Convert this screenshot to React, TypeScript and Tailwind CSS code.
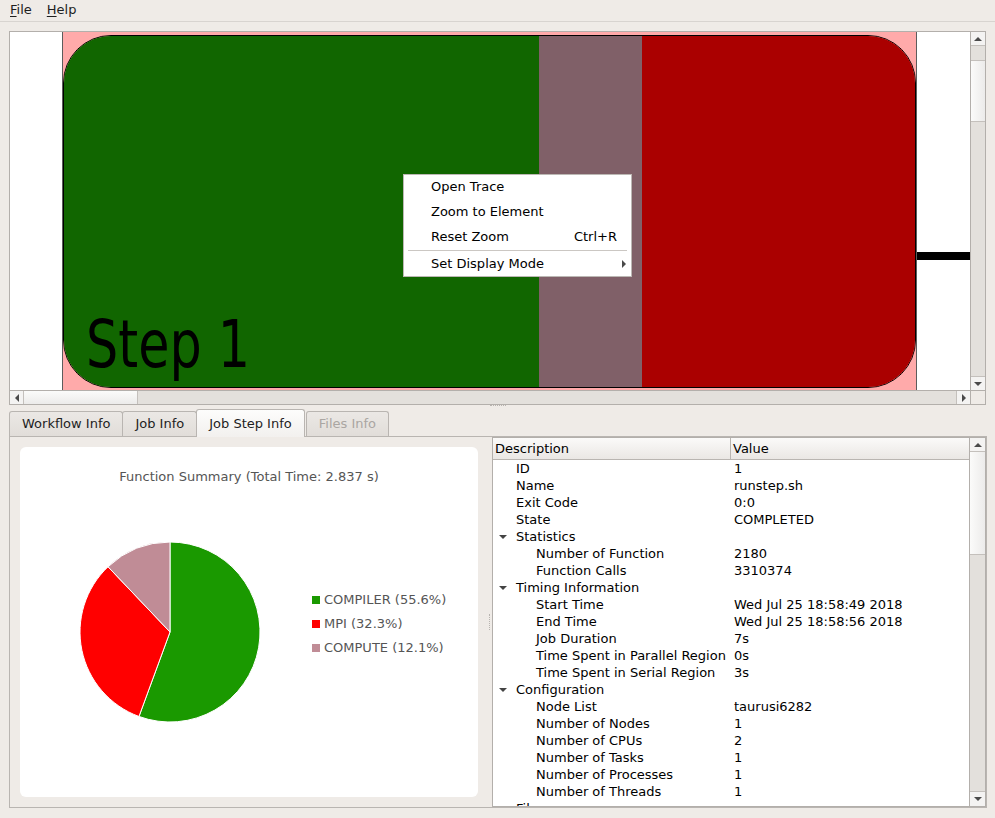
import React from 'react';

type Row = { kind: 'leaf' | 'group' | 'child'; d: string; v?: string };

const rows: Row[] = [
  { kind: 'leaf', d: 'ID', v: '1' },
  { kind: 'leaf', d: 'Name', v: 'runstep.sh' },
  { kind: 'leaf', d: 'Exit Code', v: '0:0' },
  { kind: 'leaf', d: 'State', v: 'COMPLETED' },
  { kind: 'group', d: 'Statistics' },
  { kind: 'child', d: 'Number of Function', v: '2180' },
  { kind: 'child', d: 'Function Calls', v: '3310374' },
  { kind: 'group', d: 'Timing Information' },
  { kind: 'child', d: 'Start Time', v: 'Wed Jul 25 18:58:49 2018' },
  { kind: 'child', d: 'End Time', v: 'Wed Jul 25 18:58:56 2018' },
  { kind: 'child', d: 'Job Duration', v: '7s' },
  { kind: 'child', d: 'Time Spent in Parallel Region', v: '0s' },
  { kind: 'child', d: 'Time Spent in Serial Region', v: '3s' },
  { kind: 'group', d: 'Configuration' },
  { kind: 'child', d: 'Node List', v: 'taurusi6282' },
  { kind: 'child', d: 'Number of Nodes', v: '1' },
  { kind: 'child', d: 'Number of CPUs', v: '2' },
  { kind: 'child', d: 'Number of Tasks', v: '1' },
  { kind: 'child', d: 'Number of Processes', v: '1' },
  { kind: 'child', d: 'Number of Threads', v: '1' },
  { kind: 'group', d: 'Files' },
];

const legend = [
  { color: 'bg-[#1a9900]', label: 'COMPILER (55.6%)' },
  { color: 'bg-[#ff0000]', label: 'MPI (32.3%)' },
  { color: 'bg-[#c08c96]', label: 'COMPUTE (12.1%)' },
];

const UpArrow = () => (
  <div className="w-0 h-0 border-x-[4px] border-x-transparent border-b-[4px] border-b-[#4a4a4a]" />
);
const DownArrow = () => (
  <div className="w-0 h-0 border-x-[4px] border-x-transparent border-t-[4px] border-t-[#4a4a4a]" />
);
const LeftArrow = () => (
  <div className="w-0 h-0 border-y-[4px] border-y-transparent border-r-[4px] border-r-[#4a4a4a]" />
);
const RightArrow = () => (
  <div className="w-0 h-0 border-y-[4px] border-y-transparent border-l-[4px] border-l-[#4a4a4a]" />
);

const Tab = ({ label, selected, disabled, first }: { label: string; selected?: boolean; disabled?: boolean; first?: boolean }) => (
  <div
    className={`flex items-center justify-center px-[12px] border border-[#b9b5b1] rounded-t-[3px] ${first ? '' : '-ml-px'} ${
      selected
        ? 'h-[28px] -mb-px border-b-0 bg-gradient-to-b from-[#fdfdfc] to-[#f2f0ee] z-10'
        : 'h-[25px] border-b-0 bg-gradient-to-b from-[#ebe8e5] to-[#e1ddd9]'
    } ${disabled ? 'text-[#aaa6a2]' : 'text-[#1e1e1e]'}`}
  >
    {label}
  </div>
);

export default function App() {
  return (
    <div className="relative w-[995px] h-[818px] overflow-hidden bg-[#efebe7] font-['DejaVu_Sans',sans-serif] text-[13px] text-[#1e1e1e] leading-[16px]">
      {/* menu bar */}
      <div className="h-[22px] border-b border-[#d8d4d0] flex items-center gap-[15px] pl-[10px] pb-[2px]">
        <span><span className="underline underline-offset-2">F</span>ile</span>
        <span><span className="underline underline-offset-2">H</span>elp</span>
      </div>

      {/* graphics view */}
      <div className="ml-[9px] mt-[9px] w-[977px] h-[374px] border border-[#b3afab] flex flex-col">
        <div className="flex h-[358px]">
          <div className="flex-1 flex bg-white overflow-hidden">
            <div className="w-[52px] shrink-0" />
            <div className="w-[855px] shrink-0 h-full bg-[#ffaaaa] border-x border-[#5c5c5c] pt-[3px]">
              <div className="h-[353px] rounded-[48px] border border-black overflow-hidden flex">
                <div className="w-[475px] shrink-0 bg-[#116600] flex flex-col justify-end pl-[22px] pb-[2px]">
                  <span className="text-[66px] leading-[80px] text-black origin-left scale-x-[0.77] inline-block whitespace-nowrap">Step 1</span>
                </div>
                <div className="w-[103px] shrink-0 bg-[#806068]" />
                <div className="flex-1 bg-[#aa0000]" />
              </div>
            </div>
            <div className="flex-1 flex flex-col">
              <div className="mt-[220px] h-[8px] bg-black" />
            </div>
          </div>
          <div className="w-[15px] border-l border-[#b3afab] flex flex-col bg-[#e3e0dc]">
            <div className="h-[14px] flex items-center justify-center bg-[#f4f3f2] border-b border-[#c4c0bc]"><UpArrow /></div>
            <div className="h-[14px]" />
            <div className="h-[62px] bg-gradient-to-r from-[#fbfbfa] to-[#ecebea] border-y border-[#c4c0bc]" />
            <div className="flex-1" />
            <div className="h-[14px] flex items-center justify-center bg-[#f4f3f2] border-t border-[#c4c0bc]"><DownArrow /></div>
          </div>
        </div>
        <div className="flex h-[14px] border-t border-[#b3afab]">
          <div className="flex-1 flex bg-[#e3e0dc]">
            <div className="w-[14px] flex items-center justify-center bg-[#f4f3f2] border-r border-[#c4c0bc]"><LeftArrow /></div>
            <div className="w-[114px] bg-gradient-to-b from-[#fbfbfa] to-[#ecebea] border-r border-[#c4c0bc]" />
            <div className="flex-1" />
            <div className="w-[14px] flex items-center justify-center bg-[#f4f3f2] border-l border-[#c4c0bc]"><RightArrow /></div>
          </div>
          <div className="w-[15px] border-l border-[#b3afab] bg-[#efebe7]" />
        </div>
      </div>

      {/* splitter handle */}
      <div className="h-[4px] flex justify-center">
        <div className="w-[16px] border-t border-dotted border-[#b8b4b0]" />
      </div>

      {/* tabs */}
      <div className="ml-[9px] h-[27px] flex items-end">
        <Tab label="Workflow Info" first />
        <Tab label="Job Info" />
        <Tab label="Job Step Info" selected />
        <div className="ml-[1px]"><Tab label="Files Info" disabled first /></div>
      </div>

      {/* tab panel */}
      <div className="ml-[9px] w-[978px] h-[372px] border border-[#b9b5b1] bg-[#efebe7] flex">
        <div className="ml-[10px] mt-[10px] w-[458px] h-[350px] shrink-0 rounded-[6px] bg-white flex flex-col">
          <div className="pt-[22px] text-center text-[#555555]">Function Summary (Total Time: 2.837 s)</div>
          <div className="flex mt-[57px]">
            <svg className="ml-[60px] shrink-0" width="180" height="180" viewBox="0 0 180 180">
              <path d="M90,90 L90,0 A90,90 0 1,1 58.98,174.48 Z" fill="#1a9900" stroke="#ffffff" strokeWidth="1" />
              <path d="M90,90 L58.98,174.48 A90,90 0 0,1 28.02,24.75 Z" fill="#ff0000" stroke="#ffffff" strokeWidth="1" />
              <path d="M90,90 L28.02,24.75 A90,90 0 0,1 90,0 Z" fill="#c08c96" stroke="#ffffff" strokeWidth="1" />
            </svg>
            <div className="ml-[52px] mt-[50px] flex flex-col gap-[8px]">
              {legend.map((l) => (
                <div key={l.label} className="flex items-center gap-[4px] text-[#555555]">
                  <div className={`w-[8px] h-[8px] ${l.color}`} />
                  <span>{l.label}</span>
                </div>
              ))}
            </div>
          </div>
        </div>
        <div className="w-[14px] shrink-0 flex items-center justify-end">
          <div className="h-[16px] border-l border-dotted border-[#b8b4b0] mr-[2px]" />
        </div>
        <div className="w-[494px] h-[370px] shrink-0 border border-[#b3afab] bg-white flex overflow-hidden">
          <div className="flex-1 flex flex-col overflow-hidden">
            <div className="h-[22px] shrink-0 flex border-b border-[#b9b5b1] bg-gradient-to-b from-[#fbfaf9] to-[#eae7e4] text-black">
              <div className="w-[238px] border-r border-[#b9b5b1] pl-[2px] flex items-center">Description</div>
              <div className="flex-1 pl-[2px] flex items-center">Value</div>
            </div>
            {rows.map((r) => (
              <div key={r.d} className="h-[17px] shrink-0 flex leading-[17px] text-black">
                <div className="w-[238px] relative whitespace-nowrap">
                  {r.kind === 'group' && (
                    <div className="absolute left-[6px] top-[7px] w-0 h-0 border-x-[4px] border-x-transparent border-t-[4px] border-t-[#444444]" />
                  )}
                  <span className={r.kind === 'child' ? 'pl-[43px]' : 'pl-[23px]'}>{r.d}</span>
                </div>
                <div className="flex-1 pl-[3px] whitespace-nowrap">{r.v}</div>
              </div>
            ))}
          </div>
          <div className="w-[16px] border-l border-[#b3afab] flex flex-col bg-[#e3e0dc]">
            <div className="h-[14px] flex items-center justify-center bg-[#f4f3f2] border-b border-[#c4c0bc]"><UpArrow /></div>
            <div className="h-[103px] bg-gradient-to-r from-[#fbfbfa] to-[#ecebea] border-b border-[#c4c0bc]" />
            <div className="flex-1" />
            <div className="h-[15px] flex items-center justify-center bg-[#f4f3f2] border-t border-[#c4c0bc]"><DownArrow /></div>
          </div>
        </div>
      </div>

      {/* context menu */}
      <div className="absolute left-[403px] top-[174px] w-[229px] bg-white border border-[#bcb8b4] text-black">
        <div className="h-[24px] flex items-center pl-[27px]">Open Trace</div>
        <div className="h-[25px] flex items-center pl-[27px]">Zoom to Element</div>
        <div className="h-[25px] flex items-center pl-[27px] pr-[14px] justify-between">
          <span>Reset Zoom</span>
          <span>Ctrl+R</span>
        </div>
        <div className="h-[3px] flex items-center px-[4px]">
          <div className="flex-1 border-t border-[#cbc7c3]" />
        </div>
        <div className="h-[24px] flex items-center pl-[27px] pr-[5px] justify-between">
          <span>Set Display Mode</span>
          <RightArrow />
        </div>
      </div>
    </div>
  );
}
